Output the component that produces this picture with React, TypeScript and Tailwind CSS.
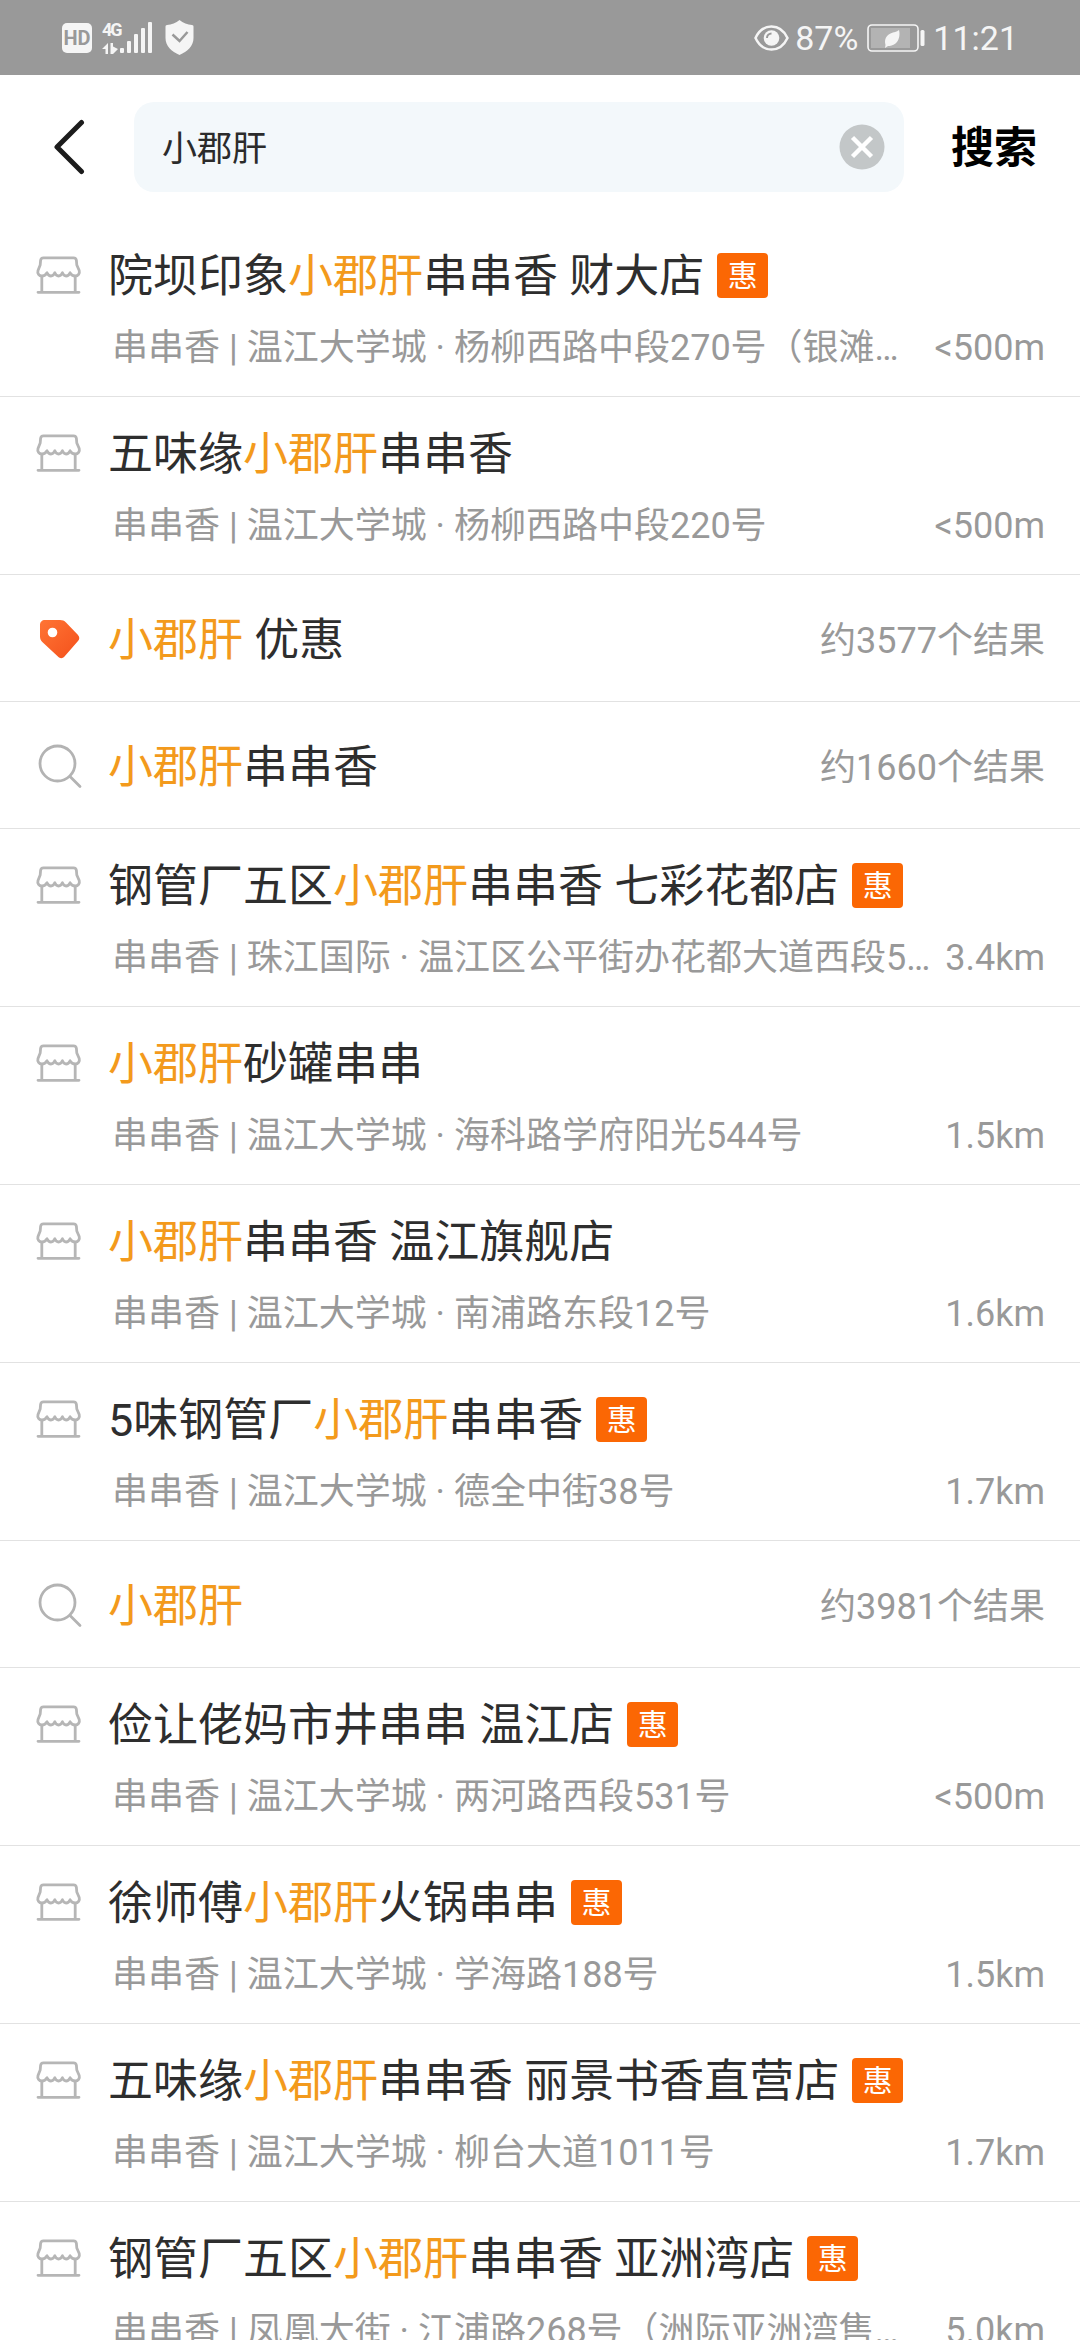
import { ReactNode } from "react";

type Part = string | { hit: string };

type Item = {
  kind: "shop" | "search" | "deal";
  title: Part[];
  badge?: boolean;
  detail?: string;
  right: string;
};

const hit = { hit: "小郡肝" };

const items: Item[] = [
  {
    kind: "shop",
    title: ["院坝印象", hit, "串串香 财大店"],
    badge: true,
    detail: "串串香 | 温江大学城 · 杨柳西路中段270号（银滩…",
    right: "<500m",
  },
  {
    kind: "shop",
    title: ["五味缘", hit, "串串香"],
    detail: "串串香 | 温江大学城 · 杨柳西路中段220号",
    right: "<500m",
  },
  { kind: "deal", title: [hit, " 优惠"], right: "约3577个结果" },
  { kind: "search", title: [hit, "串串香"], right: "约1660个结果" },
  {
    kind: "shop",
    title: ["钢管厂五区", hit, "串串香 七彩花都店"],
    badge: true,
    detail: "串串香 | 珠江国际 · 温江区公平街办花都大道西段5…",
    right: "3.4km",
  },
  {
    kind: "shop",
    title: [hit, "砂罐串串"],
    detail: "串串香 | 温江大学城 · 海科路学府阳光544号",
    right: "1.5km",
  },
  {
    kind: "shop",
    title: [hit, "串串香 温江旗舰店"],
    detail: "串串香 | 温江大学城 · 南浦路东段12号",
    right: "1.6km",
  },
  {
    kind: "shop",
    title: ["5味钢管厂", hit, "串串香"],
    badge: true,
    detail: "串串香 | 温江大学城 · 德全中街38号",
    right: "1.7km",
  },
  { kind: "search", title: [hit], right: "约3981个结果" },
  {
    kind: "shop",
    title: ["俭让佬妈市井串串 温江店"],
    badge: true,
    detail: "串串香 | 温江大学城 · 两河路西段531号",
    right: "<500m",
  },
  {
    kind: "shop",
    title: ["徐师傅", hit, "火锅串串"],
    badge: true,
    detail: "串串香 | 温江大学城 · 学海路188号",
    right: "1.5km",
  },
  {
    kind: "shop",
    title: ["五味缘", hit, "串串香 丽景书香直营店"],
    badge: true,
    detail: "串串香 | 温江大学城 · 柳台大道1011号",
    right: "1.7km",
  },
  {
    kind: "shop",
    title: ["钢管厂五区", hit, "串串香 亚洲湾店"],
    badge: true,
    detail: "串串香 | 凤凰大街 · 江浦路268号（洲际亚洲湾售…",
    right: "5.0km",
  },
];

function ShopIcon() {
  return (
    <svg width="48" height="40" viewBox="0 0 48 40" fill="none" stroke="#b6b6b6" strokeWidth="2.8" strokeLinecap="round" strokeLinejoin="round">
      <path d="M8.500 2.800h30c1.800 0 2.700.9 2.900 2.600l.4 4.600 2.400 5.500c.8 3-1 5.500-4 5.500-2.300 0-4-1.200-5.100-3.200-1 2-2.300 3.200-4 3.200s-2.900-1.200-3.700-3.200c-.8 2-2.100 3.200-3.800 3.200s-3-1.200-3.800-3.200c-.8 2-2 3.200-3.800 3.200s-3-1.200-4-3.200c-1.200 2-2.800 3.200-5 3.200-3 0-4.900-2.500-4-5.500L5.200 10l.4-4.600c.2-1.700 1.200-2.600 2.900-2.600z" />
      <path d="M6.800 21.500v15.500M40.200 21.500v15.500M3 37.300h41" />
    </svg>
  );
}

function SearchIcon() {
  return (
    <svg className="ml-px" width="46" height="46" viewBox="0 0 46 46" fill="none" stroke="#b3b3b3" strokeWidth="2.8" strokeLinecap="round">
      <circle cx="21.500" cy="20.500" r="17.500" />
      <path d="M34 33.500l10 10" />
    </svg>
  );
}

function DealIcon() {
  return (
    <svg className="ml-px" width="46" height="46" viewBox="0 0 46 46">
      <defs>
        <linearGradient id="deal" x1="0" y1="0" x2="1" y2="1">
          <stop offset="0" stopColor="#ff7434" />
          <stop offset="1" stopColor="#f4511c" />
        </linearGradient>
      </defs>
      <path
        fill="url(#deal)"
        fillRule="evenodd"
        d="M9 4h15c2.500 0 4.300.7 6 2.400l11.800 12.300c2 2.200 2 4.500 0 6.600L28.500 40.500c-2 2.200-4.500 2.200-6.600 0L6.300 26C4.700 24.400 4 22.700 4 20.500V9c0-3 2-5 5-5zM16.500 11.700a4.800 4.800 0 1 0 0 9.600 4.800 4.800 0 0 0 0-9.600z"
      />
    </svg>
  );
}

function StatusBar() {
  return (
    <div className="flex h-[75px] items-center justify-between bg-[#999999] pl-[62px] pr-[62px] text-[#f5f5f5]">
      <div className="flex items-center">
        <div className="flex h-[30px] w-[30px] items-center justify-center rounded-[5px] bg-[#f5f5f5] text-[20px] font-bold text-[#999999]">
          HD
        </div>
        <div className="ml-[10px] flex h-[34px] w-[18px] flex-col justify-between">
          <span className="text-[18px] leading-[17px] font-bold tracking-[-2px]">4G</span>
          <svg width="18" height="12" viewBox="0 0 18 12" fill="#f5f5f5">
            <path d="M0 6l6-6v11H3.500V6zM8.500 0H11v3.500l5 2.500-5 5H8.500z" />
          </svg>
        </div>
        <svg width="34" height="34" viewBox="17 0 34 34" fill="#f5f5f5">
          <rect x="17" y="27" width="4" height="5" rx="1" />
          <rect x="24" y="20" width="4" height="12" rx="1" />
          <rect x="31" y="13" width="4" height="19" rx="1" />
          <rect x="38" y="7" width="4" height="25" rx="1" />
          <rect x="45" y="1" width="4" height="31" rx="1" />
        </svg>
        <svg className="ml-[11px]" width="29" height="35" viewBox="0 0 29 35">
          <path fill="#f5f5f5" d="M14.500 0c3.500 3 8 4.400 12.500 5 1 .2 1.500.8 1.500 1.800V18c0 8-6 13.500-14 17C6.500 31.500.5 26 .5 18V6.800C.5 5.800 1 5.200 2 5c4.500-.6 9-2 12.500-5z" />
          <path d="M7.500 14.500l7 6.500 8-9" fill="none" stroke="#999999" strokeWidth="2.500" />
        </svg>
      </div>
      <div className="flex items-center">
        <svg width="35" height="28" viewBox="0 0 35 28">
          <path d="M1.500 14C5 6.500 10.500 2.500 17.500 2.500S30 6.500 33.500 14c-3.500 7.500-9 11.500-16 11.500S5 21.500 1.500 14z" fill="none" stroke="#f5f5f5" strokeWidth="2.500" />
          <circle cx="17.500" cy="14" r="7.800" fill="#f5f5f5" />
          <path d="M13 14a4.500 4.500 0 0 1 4.500-4.500" fill="none" stroke="#999999" strokeWidth="2" />
        </svg>
        <span className="ml-[6px] pt-[2px] text-[34px]">87%</span>
        <svg className="ml-[9px]" width="60" height="30" viewBox="0 0 60 30">
          <rect x="1" y="2" width="50" height="26" rx="4" fill="none" stroke="#f5f5f5" strokeWidth="1.600" />
          <rect x="4" y="5" width="39" height="20" fill="#b3b3b3" />
          <path d="M18.500 22c-1.500-6 1-9.500 5-11.500 3.500-1.500 6-1.500 8.500-3.500 1.500 6-.5 11-3.500 13.500-2.500 2-5.500 2.500-7.500 2.500l-3 2z" fill="#f5f5f5" />
          <rect x="53.500" y="7" width="4" height="16" rx="1.500" fill="#f5f5f5" />
        </svg>
        <span className="ml-[6px] pt-[2px] text-[34px]">11:21</span>
      </div>
    </div>
  );
}

function SearchHeader() {
  return (
    <div className="flex h-[144px] items-center pl-[53px] pt-[3px] pb-[3px]">
      <svg width="33" height="56" viewBox="0 0 33 56" fill="none" stroke="#1c1c1c" strokeWidth="5" strokeLinecap="round" strokeLinejoin="round">
        <path d="M28.500 3.500L4 28l24.500 24.500" />
      </svg>
      <div className="ml-[48px] flex h-[90px] w-[770px] items-center justify-between rounded-[20px] bg-[#f3f8fb] pl-[28px] pr-[19px]">
        <span className="pt-[6px] text-[35px] text-[#2b2b2b]">小郡肝</span>
        <svg width="46" height="46" viewBox="0 0 46 46">
          <circle cx="23" cy="23" r="22.500" fill="#c3c7c8" />
          <path d="M13.500 13.500l19 19M32.500 13.500l-19 19" stroke="#ffffff" strokeWidth="4.500" />
        </svg>
      </div>
      <span className="ml-[47px] pt-[2px] text-[43px] font-bold whitespace-nowrap text-black">搜索</span>
    </div>
  );
}

function Title({ parts }: { parts: Part[] }) {
  return (
    <span className="whitespace-pre pt-[3px] text-[45px] leading-[60px] text-[#2e2e2e]">
      {parts.map((p, i) =>
        typeof p === "string" ? (
          p
        ) : (
          <span key={i} className="text-[#f39a1c]">
            {p.hit}
          </span>
        )
      )}
    </span>
  );
}

function Side({ children }: { children: ReactNode }) {
  return <div className="flex w-[108px] shrink-0 items-center pl-[35px]">{children}</div>;
}

function Row({ item }: { item: Item }) {
  if (item.kind !== "shop") {
    return (
      <div className="flex h-[127px] items-center border-b border-[#e2e2e2] pt-[2px] pr-[35px]">
        <Side>{item.kind === "deal" ? <DealIcon /> : <SearchIcon />}</Side>
        <Title parts={item.title} />
        <span className="ml-auto pt-[3px] text-[36px] text-[#999999]">{item.right}</span>
      </div>
    );
  }

  return (
    <div className="h-[178px] border-b border-[#e2e2e2] pt-[26px] pr-[35px]">
      <div className="flex h-[60px] items-center">
        <Side>
          <ShopIcon />
        </Side>
        <Title parts={item.title} />
        {item.badge && (
          <span className="ml-[13px] flex h-[45px] w-[51px] items-center justify-center rounded-[4px] bg-[#fb6704] text-[30px] text-white">
            惠
          </span>
        )}
      </div>
      <div className="mt-[19px] flex justify-between pl-[112px] text-[36px] leading-[48px] text-[#999999]">
        <span className="whitespace-nowrap">{item.detail}</span>
        <span>{item.right}</span>
      </div>
    </div>
  );
}

export default function App() {
  return (
    <div className="h-[2340px] w-[1080px] overflow-hidden bg-white font-[Roboto,'Noto_Sans_CJK_SC',sans-serif]">
      <StatusBar />
      <SearchHeader />
      {items.map((item, i) => (
        <Row key={i} item={item} />
      ))}
    </div>
  );
}
